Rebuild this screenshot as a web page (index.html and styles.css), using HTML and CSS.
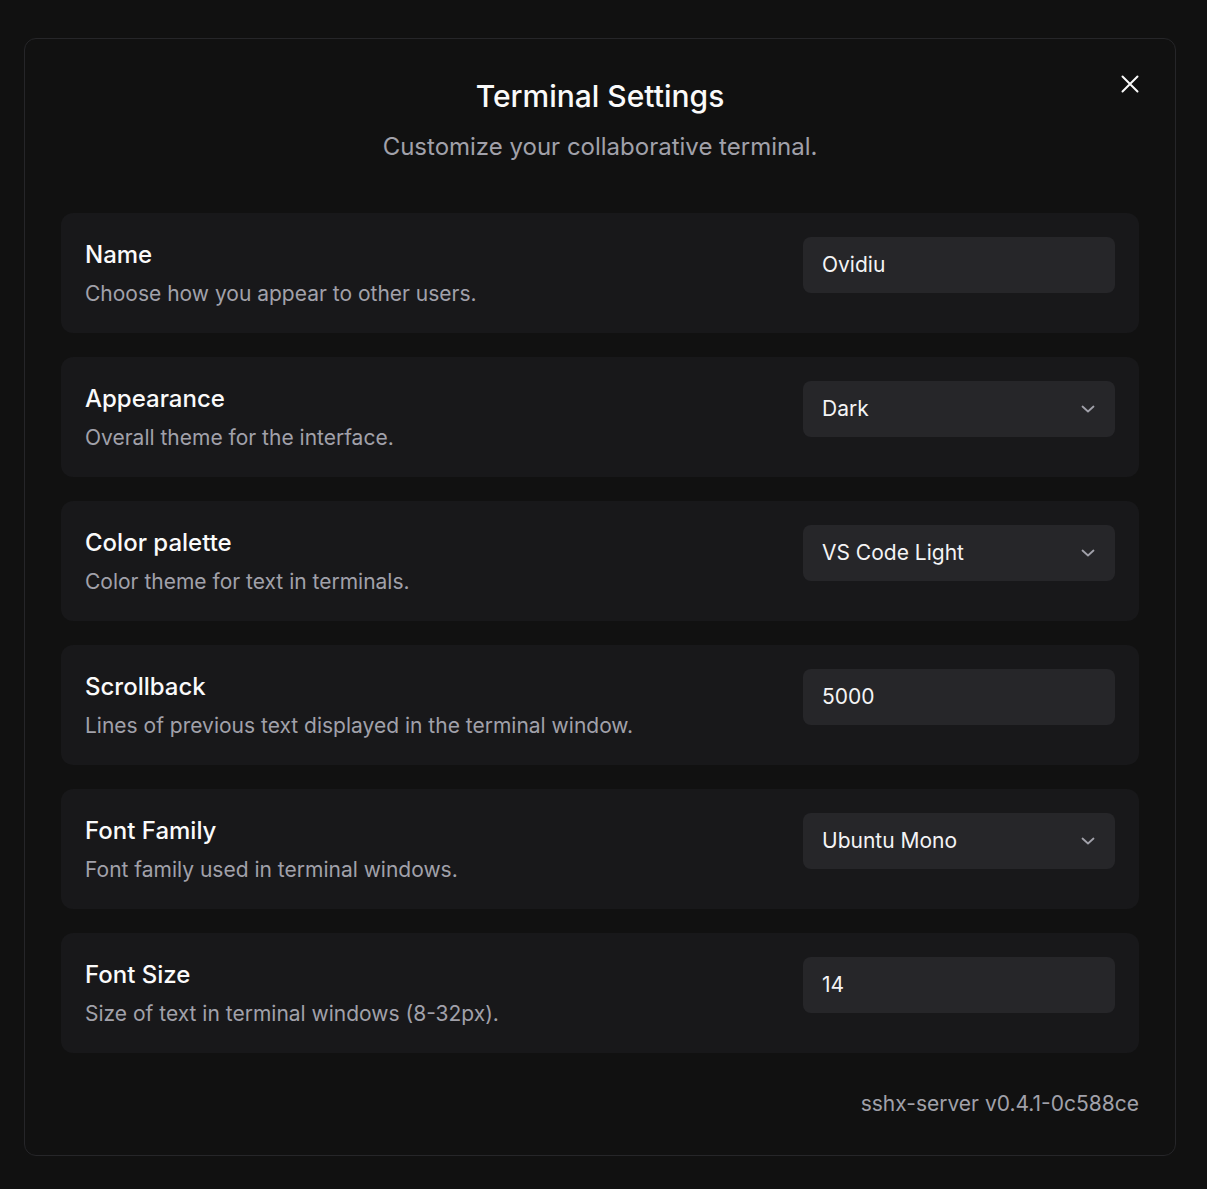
FILE: index.html
```html
<!DOCTYPE html>
<html lang="en">
<head>
<meta charset="utf-8">
<title>Terminal Settings</title>
<link rel="stylesheet" href="styles.css">
</head>
<body>
<div class="modal">
  <button class="close" aria-label="Close">
    <svg width="18" height="18" viewBox="0 0 18 18" fill="none" stroke="currentColor" stroke-width="2" stroke-linecap="round"><path d="M1.5 1.5L16.5 16.5M16.5 1.5L1.5 16.5"/></svg>
  </button>
  <h1 class="title">Terminal Settings</h1>
  <p class="subtitle">Customize your collaborative terminal.</p>

  <div class="cards">
    <div class="card">
      <div class="info">
        <div class="label">Name</div>
        <div class="desc">Choose how you appear to other users.</div>
      </div>
      <div class="field">Ovidiu</div>
    </div>
    <div class="card">
      <div class="info">
        <div class="label">Appearance</div>
        <div class="desc">Overall theme for the interface.</div>
      </div>
      <div class="field select"><span>Dark</span><svg class="chev" width="14" height="8" viewBox="0 0 14 8" fill="none" stroke="currentColor" stroke-width="1.8" stroke-linecap="round" stroke-linejoin="round"><path d="M1.5 1.5L7 6.5L12.5 1.5"/></svg></div>
    </div>
    <div class="card">
      <div class="info">
        <div class="label">Color palette</div>
        <div class="desc">Color theme for text in terminals.</div>
      </div>
      <div class="field select"><span>VS Code Light</span><svg class="chev" width="14" height="8" viewBox="0 0 14 8" fill="none" stroke="currentColor" stroke-width="1.8" stroke-linecap="round" stroke-linejoin="round"><path d="M1.5 1.5L7 6.5L12.5 1.5"/></svg></div>
    </div>
    <div class="card">
      <div class="info">
        <div class="label">Scrollback</div>
        <div class="desc">Lines of previous text displayed in the terminal window.</div>
      </div>
      <div class="field">5000</div>
    </div>
    <div class="card">
      <div class="info">
        <div class="label">Font Family</div>
        <div class="desc">Font family used in terminal windows.</div>
      </div>
      <div class="field select"><span>Ubuntu Mono</span><svg class="chev" width="14" height="8" viewBox="0 0 14 8" fill="none" stroke="currentColor" stroke-width="1.8" stroke-linecap="round" stroke-linejoin="round"><path d="M1.5 1.5L7 6.5L12.5 1.5"/></svg></div>
    </div>
    <div class="card">
      <div class="info">
        <div class="label">Font Size</div>
        <div class="desc">Size of text in terminal windows (8-32px).</div>
      </div>
      <div class="field">14</div>
    </div>
  </div>

  <p class="version">sshx-server v0.4.1-0c588ce</p>
</div>
</body>
</html>
```

FILE: styles.css
```css
* { box-sizing: border-box; }

html, body {
  margin: 0;
  background: #111111;
}

body {
  font-family: Inter, "Noto Sans", sans-serif;
  color: #fafafa;
  padding: 38px 0 0 24px;
}

.modal {
  position: relative;
  width: 1152px;
  height: 1118px;
  border: 1px solid #262629;
  border-radius: 12px;
  background: #111111;
  padding: 39px 36px 36px;
}

.close {
  position: absolute;
  top: 36px;
  right: 36px;
  width: 18px;
  height: 18px;
  padding: 0;
  border: 0;
  background: none;
  color: #fafafa;
  display: flex;
}

.title {
  margin: 0;
  text-align: center;
  font-size: 30px;
  line-height: 36px;
  font-weight: 500;
  color: #fafafa;
}

.subtitle {
  margin: 17px 0 0;
  text-align: center;
  font-size: 24px;
  line-height: 32px;
  color: #a1a1aa;
}

.cards {
  margin-top: 50px;
  display: flex;
  flex-direction: column;
  gap: 24px;
}

.card {
  background: #18181a;
  border-radius: 12px;
  padding: 24px;
  height: 120px;
  display: flex;
  justify-content: space-between;
  align-items: flex-start;
}

.info {
  padding-top: 2px;
}

.label {
  font-size: 24px;
  line-height: 32px;
  font-weight: 500;
  color: #fafafa;
}

.desc {
  margin-top: 8px;
  font-size: 21px;
  line-height: 30px;
  color: #a1a1aa;
}

.field {
  width: 312px;
  height: 56px;
  border-radius: 8px;
  background: #262629;
  padding: 0 20px 0 19px;
  display: flex;
  align-items: center;
  justify-content: space-between;
  font-size: 21px;
  line-height: 30px;
  color: #f4f4f5;
}

.chev {
  color: #a1a1aa;
}

.version {
  margin: 37px 0 0;
  text-align: right;
  font-size: 21px;
  line-height: 28px;
  color: #a1a1aa;
}
```
